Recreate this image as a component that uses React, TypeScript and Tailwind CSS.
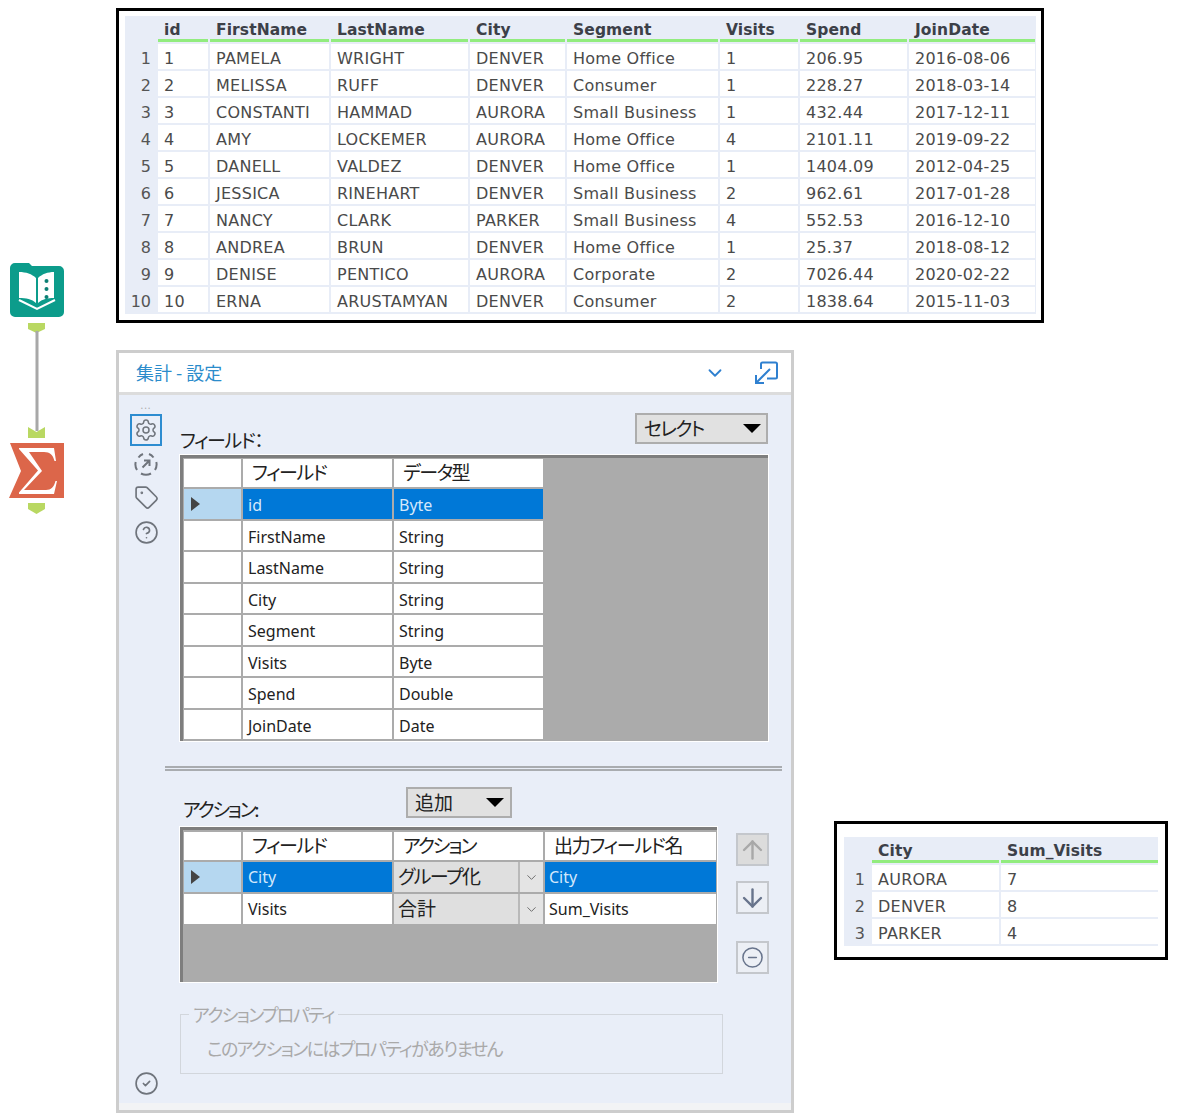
import React from "react";
import { Settings, Tag, CircleHelp, CircleCheck, ChevronDown, ArrowUp, ArrowDown, CircleMinus } from "lucide-react";

const sans = "font-['DejaVu_Sans','Liberation_Sans',sans-serif]";
const ui = "font-['Noto_Sans','Noto_Sans_CJK_JP',sans-serif]";
const jp = "font-['Noto_Sans_CJK_JP','Noto_Sans',sans-serif] [font-feature-settings:'palt']";

const heads = ["id", "FirstName", "LastName", "City", "Segment", "Visits", "Spend", "JoinDate"];
const rows = [
  ["1", "PAMELA", "WRIGHT", "DENVER", "Home Office", "1", "206.95", "2016-08-06"],
  ["2", "MELISSA", "RUFF", "DENVER", "Consumer", "1", "228.27", "2018-03-14"],
  ["3", "CONSTANTI", "HAMMAD", "AURORA", "Small Business", "1", "432.44", "2017-12-11"],
  ["4", "AMY", "LOCKEMER", "AURORA", "Home Office", "4", "2101.11", "2019-09-22"],
  ["5", "DANELL", "VALDEZ", "DENVER", "Home Office", "1", "1404.09", "2012-04-25"],
  ["6", "JESSICA", "RINEHART", "DENVER", "Small Business", "2", "962.61", "2017-01-28"],
  ["7", "NANCY", "CLARK", "PARKER", "Small Business", "4", "552.53", "2016-12-10"],
  ["8", "ANDREA", "BRUN", "DENVER", "Home Office", "1", "25.37", "2018-08-12"],
  ["9", "DENISE", "PENTICO", "AURORA", "Corporate", "2", "7026.44", "2020-02-22"],
  ["10", "ERNA", "ARUSTAMYAN", "DENVER", "Consumer", "2", "1838.64", "2015-11-03"],
];

function ResultGrid({ cols, width, head, data }: { cols: string; width: string; head: string[]; data: string[][] }) {
  return (
    <div className={`grid gap-[2px] bg-[#e8edf7] ${cols} ${width} ${sans} text-[16px] leading-[29px] text-[#4a4a4a]`}>
      <div className="h-[26px]" />
      {head.map((h) => (
        <div key={h} className="h-[26px] bg-[#e8edf7] pl-[6px] font-bold text-[15.5px] tracking-[0.1px] text-[#3c4048] border-b-[3px] border-[#92ec7e]">
          {h}
        </div>
      ))}
      {data.map((r, i) => (
        <React.Fragment key={i}>
          <div className="h-[25px] pr-[5px] text-right text-[#555]">{i + 1}</div>
          {r.map((c, j) => (
            <div key={j} className="h-[25px] bg-white pl-[6px] tracking-[0.25px] whitespace-nowrap overflow-hidden">{c}</div>
          ))}
        </React.Fragment>
      ))}
    </div>
  );
}

function Workflow() {
  return (
    <svg width="80" height="270" viewBox="0 255 80 270" className="block">
      <path d="M15 263h14l3 3h27a5 5 0 0 1 5 5v41a5 5 0 0 1-5 5H15a5 5 0 0 1-5-5V268a5 5 0 0 1 5-5z" fill="#0c9c8b" />
      <path d="M19 272c7 0 13 2 17 6v25c-4-4-10-5-17-5z" fill="#fff" />
      <path d="M38 278c4-4 10-6 16-6v26c-6 0-12 1-16 5z" fill="#fff" />
      <circle cx="46.500" cy="281" r="2" fill="#0c7f74" />
      <circle cx="46.500" cy="289" r="2" fill="#0c7f74" />
      <circle cx="46.500" cy="297" r="2" fill="#0c7f74" />
      <path d="M19 300l18 9 18-9" fill="none" stroke="#fff" strokeWidth="2" />
      <path d="M28 323h17v6l-8.500 4-8.500-4z" fill="#b9d862" />
      <rect x="35.500" y="331" width="3" height="100" fill="#a8a8a8" />
      <path d="M28 427l8.500 5 8.500-5v11H28z" fill="#b9d862" />
      <path d="M10 443h54v55H9l12-27z" fill="#dc664a" />
      <path d="M19 448H54L56 461H54.500C53 455 50 452 44 452H29L42 471 24 490H46C51 490 54 487 55.500 481H57L54 494H19V492.500L38 470.500 19 449Z" fill="#fff" />
      <path d="M28 503h17v6l-8.500 5-8.500-5z" fill="#b9d862" />
    </svg>
  );
}

function Tri({ className = "" }: { className?: string }) {
  return (
    <svg width="18" height="9" viewBox="0 0 18 9" className={className}>
      <path d="M0 0h18l-9 9z" fill="#000" />
    </svg>
  );
}

function RowMark() {
  return (
    <svg width="9" height="14" viewBox="0 0 9 14" className="ml-[7px]">
      <path d="M0 0l9 7-9 7z" fill="#444" />
    </svg>
  );
}

const selText = "text-[#d4e8fb]";

function FieldsGrid() {
  const data = [
    ["id", "Byte"],
    ["FirstName", "String"],
    ["LastName", "String"],
    ["City", "String"],
    ["Segment", "String"],
    ["Visits", "Byte"],
    ["Spend", "Double"],
    ["JoinDate", "Date"],
  ];
  return (
    <div className="w-[588px] h-[286px] border-t-[3px] border-l-[3px] border-[#7e7e7e] bg-[#ababab] outline outline-1 outline-white p-[1px]">
      <div className={`grid grid-cols-[57px_149px_149px] grid-rows-[28px_repeat(8,29.500px)] gap-[2px] w-[359px] ${ui} text-[16px] text-[#222]`}>
        <div className="bg-white" />
        <div className={`bg-white pl-[9px] ${jp} text-[19px] leading-[26px] tracking-[-1.500px]`}>フィールド</div>
        <div className={`bg-white pl-[9px] ${jp} text-[19px] leading-[26px] tracking-[-1.500px]`}>データ型</div>
        {data.map((r, i) => (
          <React.Fragment key={r[0]}>
            <div className={`flex items-center ${i === 0 ? "bg-[#b5d7f0]" : "bg-white"}`}>{i === 0 && <RowMark />}</div>
            <div className={`pl-[5px] leading-[32px] ${i === 0 ? `bg-[#0078d7] ${selText}` : "bg-white"}`}>{r[0]}</div>
            <div className={`pl-[5px] leading-[32px] ${i === 0 ? `bg-[#0078d7] ${selText}` : "bg-white"}`}>{r[1]}</div>
          </React.Fragment>
        ))}
      </div>
    </div>
  );
}

function ActionGrid() {
  const data = [
    ["City", "グループ化", "City", "tracking-[-1.500px]"],
    ["Visits", "合計", "Sum_Visits", ""],
  ];
  const heads2 = [
    ["フィールド", "tracking-[-1.500px]"],
    ["アクション", "tracking-[-2px]"],
    ["出力フィールド名", "tracking-[-1.300px]"],
  ];
  return (
    <div className="w-[537px] h-[155px] border-t-[3px] border-l-[3px] border-[#7e7e7e] bg-[#ababab] outline outline-1 outline-white pt-[2px] pl-[1px]">
      <div className={`grid grid-cols-[57px_149px_149px_171px] gap-[2px] ${ui} text-[16px] text-[#222]`}>
        <div className="bg-white h-[28px]" />
        {heads2.map(([h, t]) => (
          <div key={h} className={`bg-white h-[28px] pl-[9px] ${jp} text-[19px] leading-[26px] ${t}`}>{h}</div>
        ))}
        {data.map((r, i) => (
          <React.Fragment key={r[0]}>
            <div className={`flex items-center h-[30px] ${i === 0 ? "bg-[#b5d7f0]" : "bg-white"}`}>{i === 0 && <RowMark />}</div>
            <div className={`pl-[5px] leading-[31px] h-[30px] ${i === 0 ? `bg-[#0078d7] ${selText}` : "bg-white"}`}>{r[0]}</div>
            <div className="flex h-[30px] gap-[2px] bg-[#b9b9b9]">
              <div className={`flex-1 bg-[#dfdfdf] pl-[4px] ${jp} text-[19px] leading-[28px] whitespace-nowrap ${r[3]}`}>{r[1]}</div>
              <div className="w-[23px] bg-[#e4e4e4] flex items-center justify-center">
                <ChevronDown size={15} strokeWidth={1.500} className="text-[#666]" />
              </div>
            </div>
            <div className={`pl-[4px] leading-[31px] h-[30px] ${i === 0 ? `bg-[#0078d7] ${selText}` : "bg-white"}`}>{r[2]}</div>
          </React.Fragment>
        ))}
      </div>
    </div>
  );
}

function Sidebar() {
  return (
    <div className="w-[54px] flex flex-col items-center text-[#6f747c]">
      <div className="text-[10px] leading-[8px] tracking-[1px] mt-[6px] text-[#aaa] h-[13px]">...</div>
      <div className="w-[32px] h-[32px] border-2 border-[#2d8cd0] flex items-center justify-center">
        <Settings size={24} strokeWidth={1.500} />
      </div>
      <svg width="26" height="26" viewBox="0 0 26 26" className="mt-[5px]" fill="none" stroke="#6f747c" strokeWidth="2">
        <path d="M5.500 6.500A10.500 10.500 0 0 1 10 3M16 3A10.500 10.500 0 0 1 20.500 6.500M23.300 11A10.500 10.500 0 0 1 22 19M18 22.500A10.500 10.500 0 0 1 8 22.500M4 19A10.500 10.500 0 0 1 2.700 11" />
        <path d="M9.500 16.500l7-7M11 9.500h5.500V15" />
      </svg>
      <Tag size={25} strokeWidth={1.600} className="mt-[8px]" />
      <CircleHelp size={25} strokeWidth={1.600} className="mt-[10px]" />
      <CircleCheck size={25} strokeWidth={1.600} className="mt-auto mb-[7px]" />
    </div>
  );
}

function SquareBtn({ children, dim = false }: { children: React.ReactNode; dim?: boolean }) {
  return (
    <div className={`w-[33px] h-[33px] border-2 border-[#c4c7cc] flex items-center justify-center ${dim ? "bg-[#dcdcdc] text-[#a8a8a8]" : "bg-[#eceff5] text-[#68748c]"}`}>
      {children}
    </div>
  );
}

function Panel() {
  return (
    <div className="w-[678px] h-[763px] mt-[27px] border-[3px] border-[#cdcdcd] flex flex-col bg-[#e9eef8]">
      <div className="h-[42px] bg-white border-b-[3px] border-[#dcdcdc] flex items-center pl-[17px] pr-[12px] shrink-0">
        <span className={`${jp} text-[18px] text-[#2b8ccb]`}>集計 - 設定</span>
        <ChevronDown size={22} strokeWidth={2} className="ml-auto text-[#2f80d0]" />
        <svg width="26" height="26" viewBox="0 0 26 26" className="ml-[27px]" fill="none" stroke="#2f80d0" strokeWidth="2">
          <path d="M8 9V4a1.500 1.500 0 0 1 1.500-1.500h13A1.500 1.500 0 0 1 24 4v13a1.500 1.500 0 0 1-1.500 1.500H14" />
          <path d="M17 9L3 23M3 15v8h8" />
        </svg>
      </div>
      <div className="flex-1 flex min-h-0">
        <Sidebar />
        <div className="flex-1 pl-[7px]">
          <div className="w-[588px] h-[60px] pt-[18px] flex items-start justify-between">
            <div className={`${jp} text-[19px] leading-[26px] text-[#222] mt-[14px] tracking-[-1.500px]`}>フィールド：</div>
            <div className={`w-[133px] h-[31px] bg-[#e1e1e1] border-2 border-[#adadad] flex items-center pl-[7px] pr-[5px] ${jp} text-[19px] text-[#222] tracking-[-1.800px]`}>
              セレクト<Tri className="ml-auto" />
            </div>
          </div>
          <FieldsGrid />
          <div className="-ml-[15px] w-[617px] h-[5px] mt-[25px] border-y-2 border-[#a9acb0]" />
          <div className="h-[56px] flex items-start pt-[16px] w-[537px]">
            <div className={`${jp} text-[19px] leading-[26px] text-[#222] mt-[9px] ml-[3px] w-[223px] tracking-[-2.200px]`}>アクション:</div>
            <div className={`w-[106px] h-[31px] bg-[#e1e1e1] border-2 border-[#adadad] flex items-center pl-[7px] pr-[6px] ${jp} text-[19px] text-[#222]`}>
              追加<Tri className="ml-auto" />
            </div>
          </div>
          <div className="flex items-start">
            <ActionGrid />
            <div className="ml-[19px] pt-[6px] flex flex-col">
              <SquareBtn dim><ArrowUp size={30} strokeWidth={2} /></SquareBtn>
              <div className="h-[15px]" />
              <SquareBtn><ArrowDown size={30} strokeWidth={2} /></SquareBtn>
              <div className="h-[27px]" />
              <SquareBtn><CircleMinus size={23} strokeWidth={1.600} /></SquareBtn>
            </div>
          </div>
          <fieldset className="w-[543px] h-[71px] mt-[21px] border border-[#d2d6dc]">
            <legend className={`ml-[8px] px-[4px] ${jp} text-[18px] leading-[22px] text-[#a9a9a9] tracking-[-1.700px]`}>アクションプロパティ</legend>
            <div className={`pl-[26px] mt-[10px] ${jp} text-[18px] leading-[26px] text-[#a9a9a9] tracking-[-1.600px]`}>このアクションにはプロパティがありません</div>
          </fieldset>
        </div>
      </div>
      <div className="h-[7px] shrink-0 bg-[#f2f3f5]" />
    </div>
  );
}

export default function App() {
  return (
    <div className="relative w-[1182px] h-[1120px] bg-white flex overflow-hidden">
      <div className="w-[116px] pt-[255px] shrink-0">
        <Workflow />
      </div>
      <div className="flex-1 pt-[8px]">
        <div className="w-[928px] h-[315px] border-[3px] border-black pt-[5px] pl-[6px]">
          <ResultGrid
            cols="grid-cols-[31px_50px_119px_137px_95px_151px_78px_107px_126px]"
            width="w-[911px] pb-[2px]"
            head={heads}
            data={rows}
          />
        </div>
        <div className="flex items-start">
          <Panel />
          <div className="ml-[40px] mt-[498px] w-[334px] h-[139px] border-[3px] border-black pt-[13px] pl-[7px]">
            <ResultGrid
              cols="grid-cols-[26px_127px_157px]"
              width="w-[314px] pb-[2px]"
              head={["City", "Sum_Visits"]}
              data={[
                ["AURORA", "7"],
                ["DENVER", "8"],
                ["PARKER", "4"],
              ]}
            />
          </div>
        </div>
      </div>
    </div>
  );
}
